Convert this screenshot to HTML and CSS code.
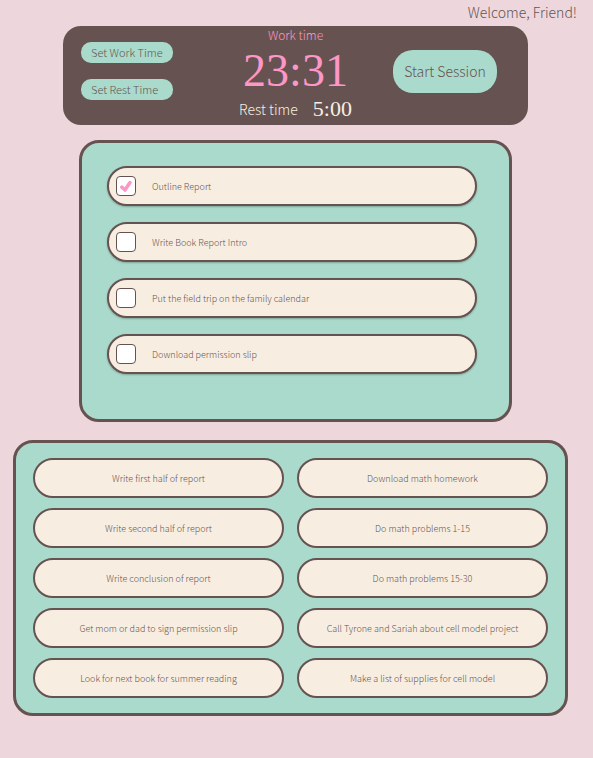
FILE: index.html
```html
<!DOCTYPE html>
<html lang="en">
<head>
<meta charset="utf-8">
<meta name="viewport" content="width=device-width, initial-scale=1">
<title>Work Session</title>
<link rel="stylesheet" href="styles.css">
</head>
<body>
<header class="welcome">Welcome, Friend!</header>
<main>
  <section class="timer" aria-label="Timer">
    <div class="timer-settings">
      <button class="btn btn-small" type="button">Set Work Time</button>
      <button class="btn btn-small" type="button">Set Rest Time</button>
    </div>
    <div class="clocks">
      <div class="work-label">Work time</div>
      <div class="work-clock">23:31</div>
      <div class="rest"><span class="rest-label">Rest time</span><span class="rest-clock">5:00</span></div>
    </div>
    <button class="btn btn-start" type="button">Start Session</button>
  </section>

  <section class="panel session" aria-label="Session tasks">
    <label class="pill task"><span class="check"><input type="checkbox" checked><svg viewBox="0 0 20 20" aria-hidden="true"><path d="M5.8 11.2 9 14 14 6.6"/></svg></span>Outline Report</label>
    <label class="pill task"><span class="check"><input type="checkbox"><svg viewBox="0 0 20 20" aria-hidden="true"><path d="M5.8 11.2 9 14 14 6.6"/></svg></span>Write Book Report Intro</label>
    <label class="pill task"><span class="check"><input type="checkbox"><svg viewBox="0 0 20 20" aria-hidden="true"><path d="M5.8 11.2 9 14 14 6.6"/></svg></span>Put the field trip on the family calendar</label>
    <label class="pill task"><span class="check"><input type="checkbox"><svg viewBox="0 0 20 20" aria-hidden="true"><path d="M5.8 11.2 9 14 14 6.6"/></svg></span>Download permission slip</label>
  </section>

  <section class="panel backlog" aria-label="Upcoming tasks">
    <button class="pill" type="button">Write first half of report</button>
    <button class="pill" type="button">Download math homework</button>
    <button class="pill" type="button">Write second half of report</button>
    <button class="pill" type="button">Do math problems 1-15</button>
    <button class="pill" type="button">Write conclusion of report</button>
    <button class="pill" type="button">Do math problems 15-30</button>
    <button class="pill" type="button">Get mom or dad to sign permission slip</button>
    <button class="pill" type="button">Call Tyrone and Sariah about cell model project</button>
    <button class="pill" type="button">Look for next book for summer reading</button>
    <button class="pill" type="button">Make a list of supplies for cell model</button>
  </section>
</main>
</body>
</html>
```
FILE: styles.css
```css
:root {
  --blush: #edd7dd;
  --cocoa: #665351;
  --mint: #aadacb;
  --cream: #f7eee1;
  --pink: #fc97c7;
}

* {
  box-sizing: border-box;
}

body {
  margin: 0;
  background: var(--blush);
  color: var(--cocoa);
  font-family: "Noto Sans CJK JP", Lato, sans-serif;
  font-weight: 300;
  font-size: 9px;
}

button {
  font-family: inherit;
  font-weight: inherit;
  color: inherit;
}

.welcome {
  padding: 2px 16px 4px;
  font-size: 14px;
  line-height: 20px;
  text-align: right;
}

.timer {
  display: grid;
  grid-template-columns: 1fr auto 1fr;
  align-items: center;
  margin: 0 65px 0 63px;
  padding-bottom: 5px;
  background: var(--cocoa);
  border-radius: 18px;
}

.timer-settings {
  display: flex;
  flex-direction: column;
  align-items: flex-start;
  gap: 16px;
  padding: 0 0 4px 18px;
}

.btn {
  border: 0;
  background: var(--mint);
}

.btn-small {
  min-width: 92px;
  padding: 0 10px;
  border-radius: 10px;
  font-size: 11px;
  line-height: 21px;
  text-align: left;
}

.btn-start {
  justify-self: end;
  min-width: 104px;
  margin: 0 31px 4px 0;
  padding: 0 8px;
  border-radius: 20px;
  font-size: 14px;
  line-height: 43px;
}

.clocks {
  display: flex;
  flex-direction: column;
  align-items: center;
}

.work-label {
  color: var(--pink);
  font-size: 12px;
  line-height: 18px;
}

.work-clock {
  color: var(--pink);
  font-family: "Liberation Serif", serif;
  font-size: 46px;
  line-height: 54px;
}

.rest {
  display: flex;
  align-items: center;
  gap: 15px;
  color: var(--cream);
  line-height: 22px;
}

.rest-label {
  font-size: 14px;
}

.rest-clock {
  font-family: "Liberation Serif", serif;
  font-size: 22px;
}

.panel {
  background: var(--mint);
  border: 3px solid var(--cocoa);
  border-radius: 20px;
}

.pill {
  height: 40px;
  background: var(--cream);
  border: 2px solid var(--cocoa);
  border-radius: 20px;
  font-size: 9px;
}

.session {
  display: flex;
  flex-direction: column;
  gap: 16px;
  margin: 15px 81px 0 79px;
  padding: 23px 32px 45px 25px;
}

.task {
  display: flex;
  align-items: center;
  gap: 16px;
  padding-left: 7px;
  box-shadow: 0 1px 2px rgba(0, 0, 0, 0.25);
}

.check {
  display: grid;
  width: 20px;
  height: 20px;
}

.check input,
.check svg {
  grid-area: 1 / 1;
  width: 20px;
  height: 20px;
  margin: 0;
}

.check input {
  appearance: none;
  background: #fff;
  border: 1px solid var(--cocoa);
  border-radius: 4px;
}

.check svg {
  visibility: hidden;
  fill: none;
  stroke: var(--pink);
  stroke-width: 3.6;
  stroke-linecap: round;
  stroke-linejoin: round;
  pointer-events: none;
}

.check input:checked + svg {
  visibility: visible;
}

.backlog {
  display: grid;
  grid-template-columns: 1fr 1fr;
  gap: 10px 13px;
  margin: 18px 25px 40px 13px;
  padding: 15px 17px;
}
```
